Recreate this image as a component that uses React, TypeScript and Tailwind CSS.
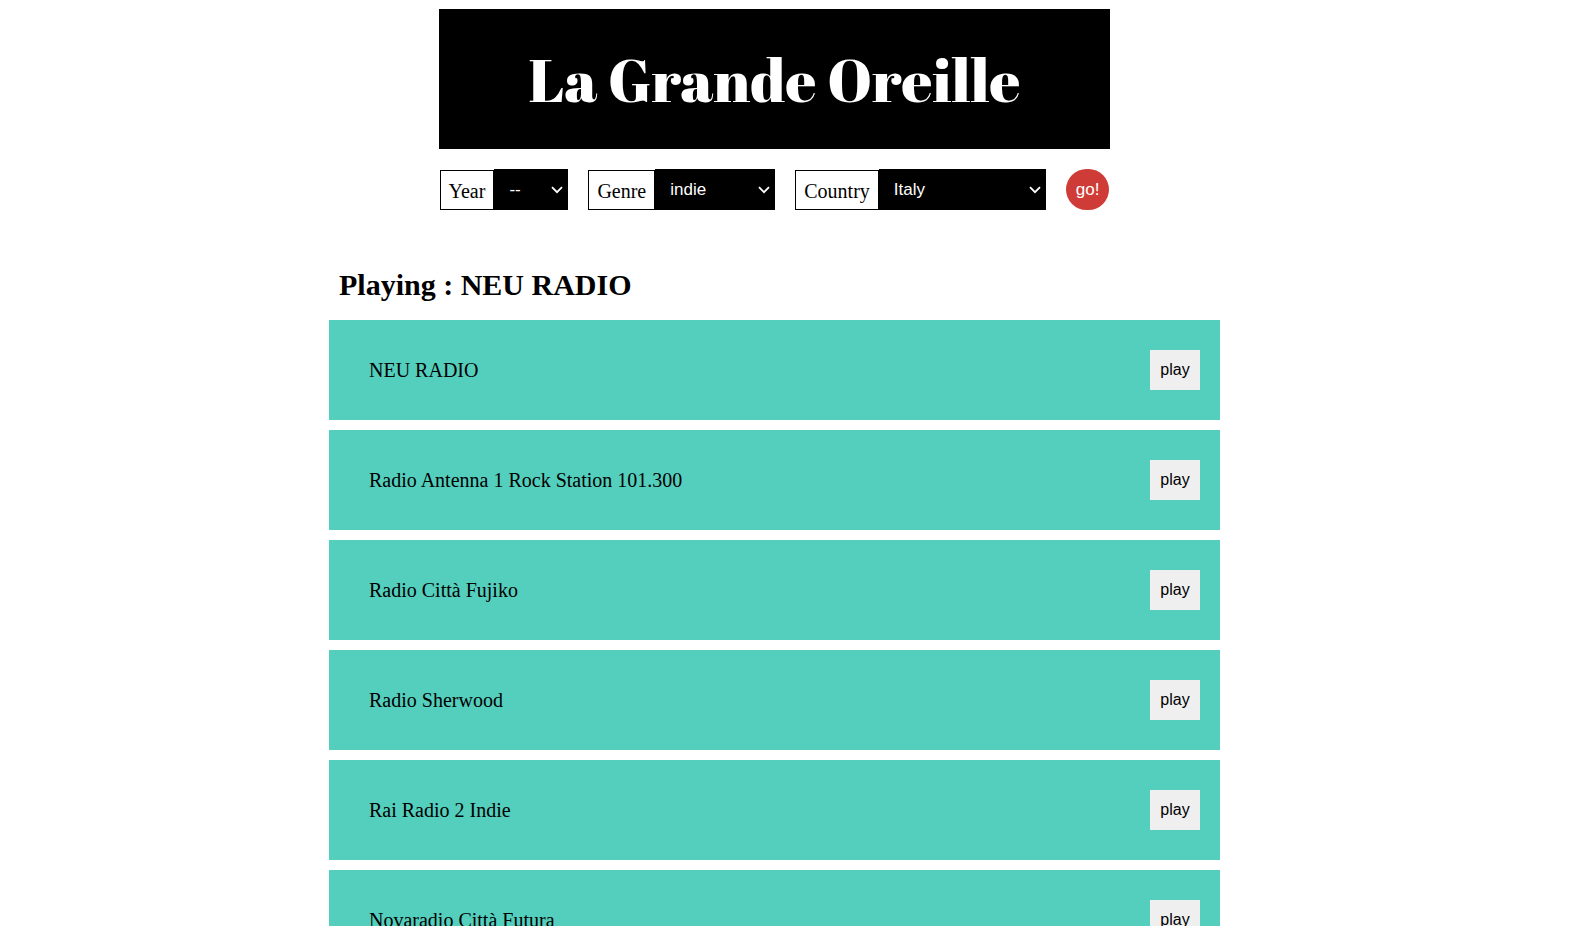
const stations = [
  'NEU RADIO',
  'Radio Antenna 1 Rock Station 101.300',
  'Radio Città Fujiko',
  'Radio Sherwood',
  'Rai Radio 2 Indie',
  'Novaradio Città Futura',
];

type FilterProps = { id: string; label: string; value: string; width: string };

function Filter({ id, label, value, width }: FilterProps) {
  return (
    <div className="flex h-[41px] items-end">
      <label
        htmlFor={id}
        className="flex h-10 items-center border border-black px-2 pt-px text-[20px] leading-none"
      >
        {label}
      </label>
      <div className="relative flex h-full">
        <select
          id={id}
          defaultValue={value}
          className={`${width} appearance-none bg-black pl-[15px] font-['Liberation_Sans',sans-serif] text-[17px] text-white`}
        >
          <option>{value}</option>
        </select>
        <svg
          viewBox="0 0 12 8"
          className="pointer-events-none absolute top-[17px] right-[5px] h-2 w-3 fill-none stroke-white stroke-[1.8]"
          aria-hidden="true"
        >
          <path d="M1 1.2 6 6.2 11 1.2" />
        </svg>
      </div>
    </div>
  );
}

export default function App() {
  return (
    <div className="h-screen overflow-y-auto bg-white pr-[21px] font-['Liberation_Serif',serif] text-black [scrollbar-width:none]">
      <header className="mx-auto flex max-w-[671px] flex-col pt-[9px]">
        <h1 className="bg-black py-[30px] text-center font-['Abril_Fatface','Liberation_Serif',serif] text-[60px] leading-[80px] font-normal text-white">
          La Grande Oreille
        </h1>
      </header>
      <form
        className="mt-5 flex justify-center gap-5"
        onSubmit={(e) => e.preventDefault()}
      >
        <Filter id="year" label="Year" value="--" width="w-[74px]" />
        <Filter id="genre" label="Genre" value="indie" width="w-[120px]" />
        <Filter id="country" label="Country" value="Italy" width="w-[167px]" />
        <button className="h-[41px] rounded-full bg-[#cf3c38] px-[10px] font-['Liberation_Sans',sans-serif] text-[17px] text-white">
          go!
        </button>
      </form>
      <main className="mx-auto mt-[57px] max-w-[891px]">
        <h2 className="px-[10px] pb-[17px] text-[30px] leading-9 font-bold">Playing : NEU RADIO</h2>
        <ul className="flex flex-col gap-[10px]">
          {stations.map((name) => (
            <li key={name} className="flex h-[100px] items-center justify-between bg-[#54cfbd] pr-5 pl-10">
              <span className="text-[20px]">{name}</span>
              <button className="h-10 w-[50px] bg-[#efefef] text-center font-['Liberation_Sans',sans-serif] text-[16px]">
                play
              </button>
            </li>
          ))}
        </ul>
      </main>
    </div>
  );
}
